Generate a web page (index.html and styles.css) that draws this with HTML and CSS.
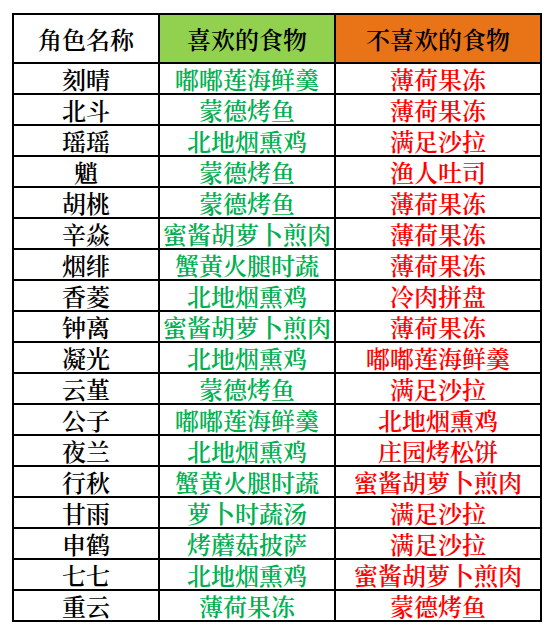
FILE: index.html
```html
<!DOCTYPE html>
<html lang="zh-CN">
<head>
<meta charset="utf-8">
<link rel="stylesheet" href="styles.css">
</head>
<body>
<table class="food">
<colgroup><col class="c1"><col class="c2"><col class="c3"></colgroup>
<thead>
<tr><th class="h1">角色名称</th><th class="h2">喜欢的食物</th><th class="h3">不喜欢的食物</th></tr>
</thead>
<tbody>
<tr><td>刻晴</td><td class="like">嘟嘟莲海鲜羹</td><td class="dislike">薄荷果冻</td></tr>
<tr><td>北斗</td><td class="like">蒙德烤鱼</td><td class="dislike">薄荷果冻</td></tr>
<tr><td>瑶瑶</td><td class="like">北地烟熏鸡</td><td class="dislike">满足沙拉</td></tr>
<tr><td>魈</td><td class="like">蒙德烤鱼</td><td class="dislike">渔人吐司</td></tr>
<tr><td>胡桃</td><td class="like">蒙德烤鱼</td><td class="dislike">薄荷果冻</td></tr>
<tr><td>辛焱</td><td class="like">蜜酱胡萝卜煎肉</td><td class="dislike">薄荷果冻</td></tr>
<tr><td>烟绯</td><td class="like">蟹黄火腿时蔬</td><td class="dislike">薄荷果冻</td></tr>
<tr><td>香菱</td><td class="like">北地烟熏鸡</td><td class="dislike">冷肉拼盘</td></tr>
<tr><td>钟离</td><td class="like">蜜酱胡萝卜煎肉</td><td class="dislike">薄荷果冻</td></tr>
<tr><td>凝光</td><td class="like">北地烟熏鸡</td><td class="dislike">嘟嘟莲海鲜羹</td></tr>
<tr><td>云堇</td><td class="like">蒙德烤鱼</td><td class="dislike">满足沙拉</td></tr>
<tr><td>公子</td><td class="like">嘟嘟莲海鲜羹</td><td class="dislike">北地烟熏鸡</td></tr>
<tr><td>夜兰</td><td class="like">北地烟熏鸡</td><td class="dislike">庄园烤松饼</td></tr>
<tr><td>行秋</td><td class="like">蟹黄火腿时蔬</td><td class="dislike">蜜酱胡萝卜煎肉</td></tr>
<tr><td>甘雨</td><td class="like">萝卜时蔬汤</td><td class="dislike">满足沙拉</td></tr>
<tr><td>申鹤</td><td class="like">烤蘑菇披萨</td><td class="dislike">满足沙拉</td></tr>
<tr><td>七七</td><td class="like">北地烟熏鸡</td><td class="dislike">蜜酱胡萝卜煎肉</td></tr>
<tr><td>重云</td><td class="like">薄荷果冻</td><td class="dislike">蒙德烤鱼</td></tr>
</tbody>
</table>
</body>
</html>
```
FILE: styles.css
```css
html, body {
  margin: 0;
  padding: 0;
  background: #ffffff;
}
body {
  padding: 13px 0 0 12px;
}
.food {
  border-collapse: collapse;
  table-layout: fixed;
  width: 530px;
  font-family: "Noto Serif CJK SC", "Noto Sans CJK SC", serif;
  font-size: 24px;
}
.c1 { width: 146px; }
.c2 { width: 176px; }
.c3 { width: 206px; }
.food th, .food td {
  border: 2px solid #000;
  text-align: center;
  vertical-align: middle;
  padding: 0;
  white-space: nowrap;
}
.food th {
  height: 47px;
  line-height: 47px;
  font-weight: 600;
  color: #000;
}
.food td {
  height: 29px;
  line-height: 29px;
  font-weight: 600;
  color: #000;
}
.h1 { background: #ffffff; }
.h2 { background: #92d050; }
.h3 { background: #e97317; }
.food td.like { color: #00b050; }
.food td.dislike { color: #ff0000; }
```
